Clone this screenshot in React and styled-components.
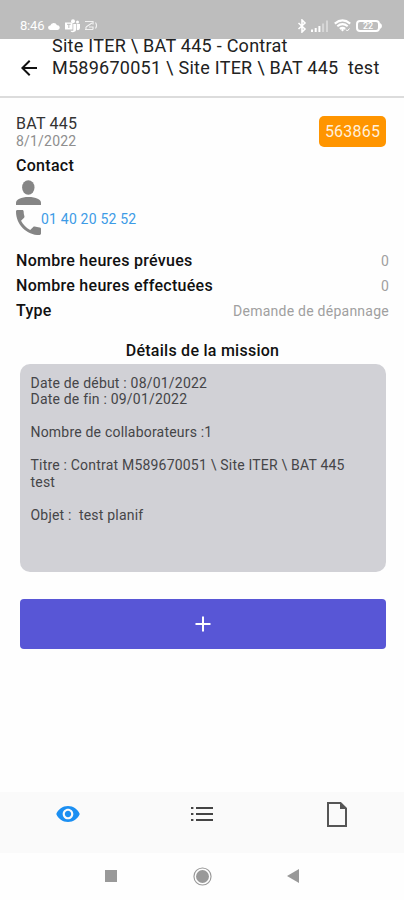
import React from 'react';
import styled, { createGlobalStyle } from 'styled-components';

export default function MissionScreen() {
    return (
        <Screen>
            <GlobalStyle />
            <StatusBar>
                <StatusGroup>
                    <Clock>8:46</Clock>
                    <CloudIcon />
                    <TeamsIcon />
                    <CastIcon />
                </StatusGroup>
                <StatusGroup>
                    <BluetoothIcon />
                    <SignalIcon />
                    <WifiIcon />
                    <Battery>22</Battery>
                    <BatteryTip />
                </StatusGroup>
            </StatusBar>

            <Header>
                <BackIcon />
                <Title>
                    <div>Site ITER \ BAT 445 - Contrat</div>
                    <div>M589670051 \ Site ITER \ BAT 445{'  '}test</div>
                </Title>
            </Header>

            <Content>
                <TopRow>
                    <div>
                        <SiteName>BAT 445</SiteName>
                        <SiteDate>8/1/2022</SiteDate>
                    </div>
                    <Badge>563865</Badge>
                </TopRow>
                <Label>Contact</Label>
                <ContactRow>
                    <PersonIcon />
                </ContactRow>
                <ContactRow $phone>
                    <PhoneIcon />
                    <Phone>01 40 20 52 52</Phone>
                </ContactRow>

                <Infos>
                    <InfoRow><Label>Nombre heures prévues</Label><Value>0</Value></InfoRow>
                    <InfoRow><Label>Nombre heures effectuées</Label><Value>0</Value></InfoRow>
                    <InfoRow><Label>Type</Label><Value>Demande de dépannage</Value></InfoRow>
                </Infos>

                <SectionTitle>Détails de la mission</SectionTitle>
                <Card>
                    {`Date de début : 08/01/2022
Date de fin : 09/01/2022

Nombre de collaborateurs :1

Titre : Contrat M589670051 \\ Site ITER \\ BAT 445
test

Objet :  test planif`}
                </Card>
                <AddButton aria-label="Ajouter">
                    <svg width="16" height="16" viewBox="0 0 16 16">
                        <path d="M8 .5v15M.5 8h15" stroke="#fff" strokeWidth="2" />
                    </svg>
                </AddButton>
            </Content>

            <TabBar>
                <Tab><EyeIcon /></Tab>
                <Tab><ListIcon /></Tab>
                <Tab><FileIcon /></Tab>
            </TabBar>
            <AndroidNav>
                <svg width="12" height="12"><path d="M0 0h12v12H0z" fill="#999" /></svg>
                <svg width="19" height="19" viewBox="0 0 20 20">
                    <circle cx="10" cy="10" r="9" fill="none" stroke="#999" strokeWidth="1.2" />
                    <circle cx="10" cy="10" r="6.8" fill="#999" />
                </svg>
                <svg width="12" height="14"><path d="M12 0v14L0 7z" fill="#999" /></svg>
            </AndroidNav>
        </Screen>
    )
}

const CloudIcon = () => (
    <StatusSvg $left="4px" width="12" height="8" viewBox="0 0 12 8">
        <path d="M2.5 8a2.3 2.3 0 0 1-.2-4.6A3.6 3.6 0 0 1 9 3.2 2.4 2.4 0 0 1 9.6 8z" fill="#fff" />
    </StatusSvg>
)

const TeamsIcon = () => (
    <StatusSvg $left="5px" width="15" height="14" viewBox="0 0 15 14">
        <circle cx="8" cy="2.2" r="2" fill="#fff" />
        <circle cx="12.5" cy="3" r="1.5" fill="#fff" />
        <path d="M0 3.5h7.500v7H0zM8.300 5h3v5.500a3.300 3.300 0 0 1-6 1.200h3zM12 5h3v4a2.400 2.400 0 0 1-3 2z" fill="#fff" />
        <path d="M2 5.300h3.700M3.850 5.300v3.700" stroke="#bdbdbd" strokeWidth="1" />
    </StatusSvg>
)

const CastIcon = () => (
    <StatusSvg $left="4px" width="14" height="11" viewBox="0 0 14 11" fill="none" stroke="#fff" strokeWidth="1.2" opacity=".8">
        <path d="M1 1.500h8v3M1 9.500h8M2 7l6-4M2 7v2.500M5 7h4v2.500M11.500 2.500q2 3 0 6" />
    </StatusSvg>
)

const BluetoothIcon = () => (
    <StatusSvg width="10" height="14" viewBox="0 0 10 14" fill="none" stroke="#fff" strokeWidth="1.6">
        <path d="M1.500 4l6.500 6-3 3V1l3 3-6.500 6" />
    </StatusSvg>
)

const SignalIcon = () => (
    <StatusSvg $left="4px" width="18" height="12" viewBox="0 0 18 12" fill="#fff">
        <path d="M0 9.500h2V12H0zM3.700 8h2v4h-2zM7.400 6h2v6h-2z" />
        <path d="M11.100 3.500h2V12h-2zM15 .5h2V12h-2z" opacity=".4" />
    </StatusSvg>
)

const WifiIcon = () => (
    <StatusSvg $left="5px" width="17" height="13" viewBox="0 0 17 13" fill="none" stroke="#fff" strokeWidth="2.1">
        <path d="M.8 4.600q7.700-6.400 15.400 0M3.300 7.300q5.200-4.300 10.400 0M5.800 9.800q2.700-2 5.400 0" />
        <path d="M8.500 9.500l1.500 1.500-1.500 1.500L7 11z" fill="#fff" stroke="none" />
        <path d="M12 10.500l1.300 1.500 2.200-2.500" strokeWidth="1" />
    </StatusSvg>
)

const BatteryTip = () => (
    <svg width="2" height="6"><path d="M0 0q2 1 2 3t-2 3z" fill="#fff" /></svg>
)

const BackIcon = () => (
    <BackSvg width="16" height="16" viewBox="4 4 16 16" fill="#111">
        <path d="M20 11H7.830l5.590-5.590L12 4l-8 8 8 8 1.410-1.410L7.830 13H20v-2z" />
    </BackSvg>
)

const PersonIcon = () => (
    <svg width="25" height="25" viewBox="0 0 25 25" fill="#858585">
        <ellipse cx="12.300" cy="7.500" rx="6.200" ry="7.300" />
        <path d="M0 25v-2.500C0 19.500 5 17 12.500 17S25 19.500 25 22.500V25z" />
    </svg>
)

const PhoneIcon = () => (
    <svg width="25" height="25" viewBox="3 3 18 18" fill="#858585">
        <path d="M6.620 10.790c1.440 2.830 3.760 5.140 6.590 6.590l2.200-2.200c.27-.27.67-.36 1.020-.24 1.120.37 2.330.57 3.570.57.55 0 1 .45 1 1V20c0 .55-.45 1-1 1-9.390 0-17-7.610-17-17 0-.55.45-1 1-1h3.500c.55 0 1 .45 1 1 0 1.250.2 2.450.57 3.570.11.35.03.74-.25 1.020l-2.200 2.200z" />
    </svg>
)

const EyeIcon = () => (
    <svg width="24" height="16" viewBox="1 4.500 22 15" fill="#1b8ff2">
        <path d="M12 4.500C7 4.500 2.730 7.610 1 12c1.730 4.390 6 7.500 11 7.500s9.270-3.110 11-7.500c-1.730-4.390-6-7.500-11-7.500zM12 17c-2.760 0-5-2.240-5-5s2.240-5 5-5 5 2.240 5 5-2.240 5-5 5zm0-8c-1.660 0-3 1.340-3 3s1.340 3 3 3 3-1.340 3-3-1.340-3-3-3z" />
    </svg>
)

const ListIcon = () => (
    <svg width="22" height="16" viewBox="0 0 22 16" stroke="#444" strokeWidth="1.800">
        <path d="M0 2h2.400M0 8h2.400M0 14h2.400M5 2h17M5 8h17M5 14h17" />
    </svg>
)

const FileIcon = () => (
    <svg width="20" height="25" viewBox="0 0 20 25" fill="none" stroke="#555" strokeWidth="2">
        <path d="M1 1h12.500L19 6.500V24H1z" />
        <path d="M13 1v6h6z" fill="#555" stroke="none" />
    </svg>
)

const GlobalStyle = createGlobalStyle`
    body {
        margin: 0;
        background: #fefefe;
        font-family: Roboto, sans-serif;
    }
    svg {
        display: block;
        flex: none;
    }
`;

const Screen = styled.div`
    display: flex;
    flex-direction: column;
    width: 404px;
    height: 900px;
    overflow: hidden;
`;

const StatusBar = styled.div`
    display: flex;
    justify-content: space-between;
    box-sizing: border-box;
    height: 39px;
    padding: 12px 22px 0 20px;
    background: #bdbdbd;
`;

const StatusGroup = styled.div`
    display: flex;
    align-items: center;
    height: 27px;
`;

const StatusSvg = styled.svg`
    margin-left: ${props => props.$left || '0'};
`;

const Clock = styled.span`
    color: #fff;
    font-size: 13px;
    line-height: 15px;
    letter-spacing: -0.2px;
`;

const Battery = styled.span`
    box-sizing: border-box;
    width: 24px;
    height: 12px;
    margin-left: 5px;
    border: 2px solid #fff;
    border-radius: 4px;
    color: #fff;
    font-size: 9px;
    font-weight: 500;
    line-height: 8px;
    text-align: center;
`;

const Header = styled.div`
    display: flex;
    box-sizing: border-box;
    height: 59px;
    padding-left: 21px;
    background: #fff;
    border-bottom: 2px solid #dcdcdc;
`;

const BackSvg = styled.svg`
    margin-top: 21px;
`;

const Title = styled.div`
    margin: -4px 0 0 15px;
    color: #222;
    font-size: 18px;
    line-height: 22px;
    letter-spacing: 0.26px;
    white-space: pre;
`;

const Content = styled.div`
    flex: 1;
    padding: 15px 15px 0 16px;
`;

const TopRow = styled.div`
    display: flex;
    justify-content: space-between;
    height: 42px;
`;

const SiteName = styled.div`
    color: #333;
    font-size: 16px;
    line-height: 21px;
    letter-spacing: 0.25px;
`;

const SiteDate = styled.div`
    color: #8e8e8e;
    font-size: 14px;
    line-height: 15px;
    letter-spacing: 0.2px;
`;

const Badge = styled.div`
    box-sizing: border-box;
    width: 67px;
    height: 31px;
    margin: 3px 3px 0 0;
    background: #ff9500;
    border-radius: 5px;
    color: #fff0dc;
    font-size: 16px;
    line-height: 31px;
    letter-spacing: 0.2px;
    text-align: center;
`;

const Label = styled.div`
    color: #111;
    font-size: 16px;
    font-weight: 500;
    line-height: 22px;
    letter-spacing: 0.28px;
`;

const ContactRow = styled.div`
    display: flex;
    height: 25px;
    margin-top: ${props => props.$phone ? '5px' : '3px'};
`;

const Phone = styled.span`
    color: #3c9be6;
    font-size: 14px;
    line-height: 18px;
    letter-spacing: 0.2px;
`;

const Infos = styled.div`
    margin-top: 14px;
`;

const InfoRow = styled.div`
    display: flex;
    justify-content: space-between;
    align-items: center;
    height: 24.7px;
`;

const Value = styled.div`
    color: #a0a0a0;
    font-size: 14px;
    line-height: 16px;
    letter-spacing: 0.25px;
`;

const SectionTitle = styled.div`
    margin-top: 17px;
    color: #111;
    font-size: 16px;
    font-weight: 500;
    line-height: 22px;
    letter-spacing: 0.26px;
    text-align: center;
`;

const Card = styled.div`
    box-sizing: border-box;
    height: 208px;
    margin: 2px 3px 0 4px;
    padding: 10.5px 10.5px;
    background: #d1d1d6;
    border-radius: 10px;
    color: #454548;
    font-size: 14px;
    line-height: 16.5px;
    letter-spacing: 0.2px;
    white-space: pre;
`;

const AddButton = styled.button`
    display: flex;
    align-items: center;
    justify-content: center;
    width: 366px;
    height: 50px;
    margin: 27px 0 0 4px;
    padding: 0;
    background: #5856d6;
    border: none;
    border-radius: 4px;
`;

const TabBar = styled.div`
    display: grid;
    grid-template-columns: repeat(3, 1fr);
    height: 61px;
    background: #fafafa;
`;

const Tab = styled.div`
    display: flex;
    align-items: center;
    justify-content: center;
    height: 44px;
    padding-left: 1px;
`;

const AndroidNav = styled.div`
    display: flex;
    align-items: center;
    justify-content: space-between;
    height: 46px;
    margin-bottom: 1px;
    padding: 0 105px;
`;
